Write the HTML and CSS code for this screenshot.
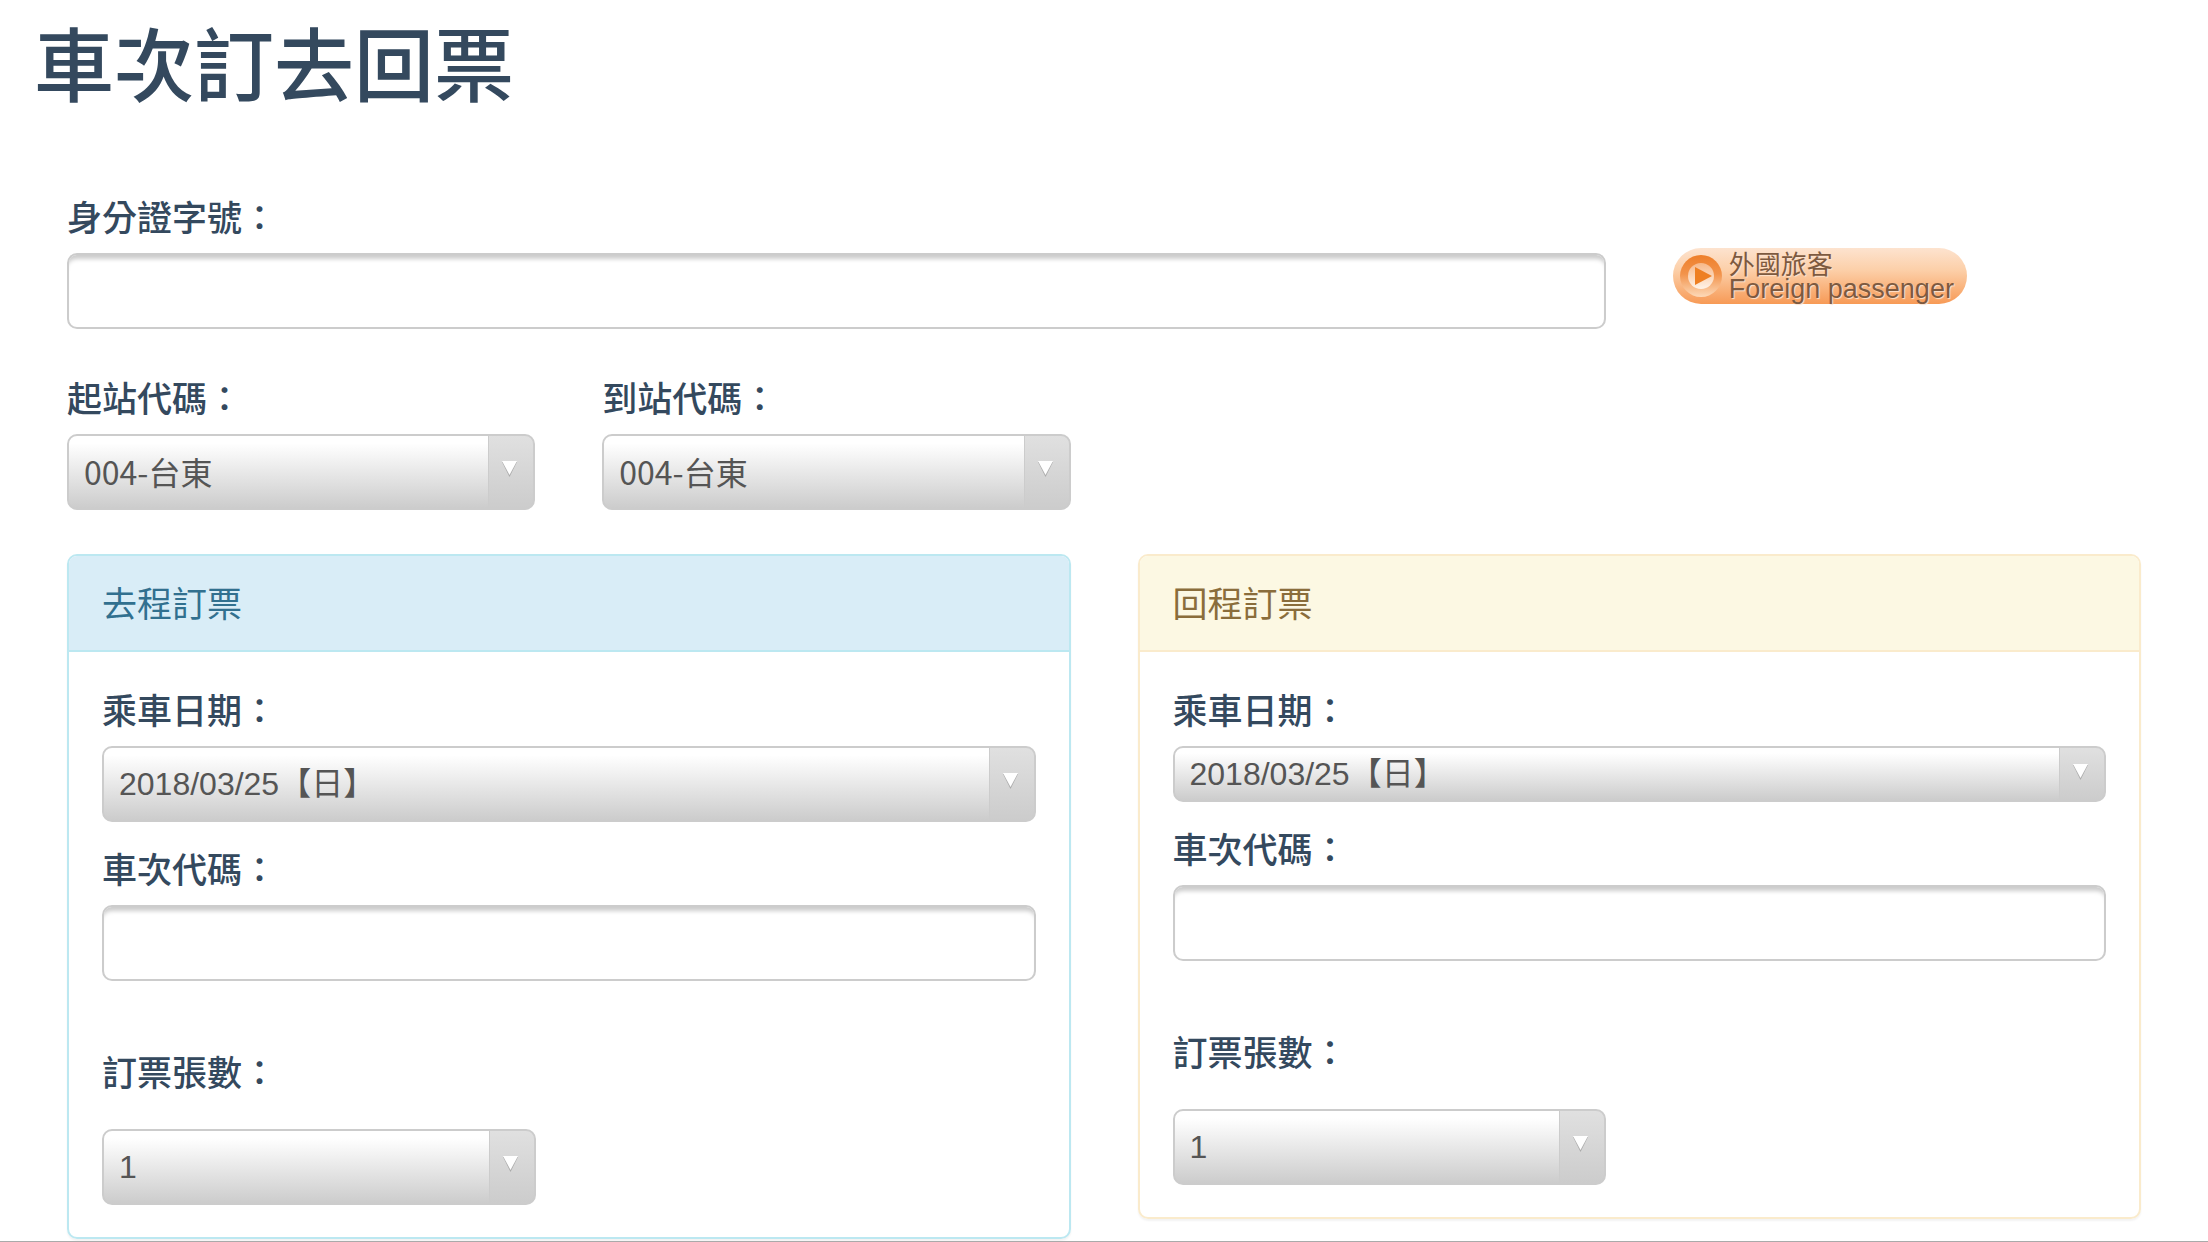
FILE: index.html
```html
<!DOCTYPE html>
<html lang="zh-Hant">
<head>
    <meta charset="UTF-8">
    <meta name="viewport" content="width=device-width, initial-scale=1.0">
    <title>車次訂去回票</title>
    <link rel="stylesheet" href="styles.css">
</head>
<body>
    <h1>車次訂去回票</h1>
    <form class="booking">
        <div class="field field-id">
            <label for="personId">身分證字號：</label>
            <input type="text" id="personId" name="personId">
        </div>
        <button type="button" class="foreign">
            <svg width="44" height="44" viewBox="0 0 44 44" aria-hidden="true">
                <defs>
                    <linearGradient id="ring" x1="0" y1="0" x2="0" y2="1">
                        <stop offset="0" stop-color="#ee7f2a"/>
                        <stop offset="0.45" stop-color="#f2934b"/>
                        <stop offset="1" stop-color="#fdd9b8"/>
                    </linearGradient>
                    <linearGradient id="disc" x1="0" y1="0" x2="0" y2="1">
                        <stop offset="0" stop-color="#f7b888"/>
                        <stop offset="1" stop-color="#fff3e8"/>
                    </linearGradient>
                </defs>
                <circle cx="22" cy="22" r="21" fill="url(#ring)"/>
                <circle cx="22" cy="22" r="13" fill="url(#disc)"/>
                <path d="M16 13 L33 22 L16 31 Z" fill="#ee7f22"/>
            </svg>
            <span class="foreign-text">
                <span class="foreign-zh">外國旅客</span>
                <span class="foreign-en">Foreign passenger</span>
            </span>
        </button>

        <div class="field field-station">
            <label for="fromStation">起站代碼：</label>
            <select id="fromStation" name="fromStation">
                <option>004-台東</option>
            </select>
        </div>
        <div class="field field-station">
            <label for="toStation">到站代碼：</label>
            <select id="toStation" name="toStation">
                <option>004-台東</option>
            </select>
        </div>

        <section class="panel panel-info">
            <h2>去程訂票</h2>
            <div class="panel-body">
                <div class="field">
                    <label for="goDate">乘車日期：</label>
                    <select id="goDate" name="goDate" class="latin">
                        <option>2018/03/25【日】</option>
                    </select>
                </div>
                <div class="field">
                    <label for="goTrain">車次代碼：</label>
                    <input type="text" id="goTrain" name="goTrain">
                </div>
                <div class="field field-count">
                    <label for="goCount">訂票張數：</label>
                    <select id="goCount" name="goCount" class="latin">
                        <option>1</option>
                    </select>
                </div>
            </div>
        </section>

        <section class="panel panel-warning">
            <h2>回程訂票</h2>
            <div class="panel-body">
                <div class="field">
                    <label for="backDate">乘車日期：</label>
                    <select id="backDate" name="backDate" class="latin compact">
                        <option>2018/03/25【日】</option>
                    </select>
                </div>
                <div class="field">
                    <label for="backTrain">車次代碼：</label>
                    <input type="text" id="backTrain" name="backTrain">
                </div>
                <div class="field field-count">
                    <label for="backCount">訂票張數：</label>
                    <select id="backCount" name="backCount" class="latin">
                        <option>1</option>
                    </select>
                </div>
            </div>
        </section>
    </form>
</body>
</html>
```

FILE: styles.css
```css
* {
    box-sizing: border-box;
}

body {
    font-family: "Noto Sans CJK TC", sans-serif;
    margin: 0;
    padding: 16px 34px 0;
    min-height: 100vh;
    color: #34495e;
    background-color: #fff;
    border-bottom: 1px solid #aaa;
}

h1 {
    margin: 0 0 87px;
    font-size: 80px;
    font-weight: 500;
    line-height: 88px;
}

.booking {
    display: grid;
    grid-template-columns: repeat(12, minmax(0, 1fr));
    column-gap: 67px;
    row-gap: 43px;
    align-items: start;
    padding: 0 33px;
}

.field {
    display: flex;
    flex-direction: column;
    gap: 12px;
}

.field-id {
    grid-column: span 9;
}

.field-station {
    grid-column: span 3;
}

label {
    font-size: 35px;
    font-weight: 500;
    line-height: 50px;
}

input,
select {
    width: 100%;
    height: 76px;
    padding: 0 15px;
    border: 2px solid #ccc;
    border-radius: 10px;
    font-family: inherit;
    font-size: 32px;
    color: #555;
}

input {
    background: #fff;
    box-shadow: inset 0 7px 4px -3px #ccc;
}

/* white arrow, arrow box with its left line, then the grey button face */
select {
    appearance: none;
    padding-bottom: 2px;
    background-color: #ddd;
    background-image:
        url("data:image/svg+xml,%3Csvg xmlns='http://www.w3.org/2000/svg' width='17' height='17'%3E%3Cpath d='M1 1H16L8.500 16Z' fill='%23aaa'/%3E%3Cpath d='M1 0H16L8.500 14Z' fill='%23fff'/%3E%3C/svg%3E"),
        linear-gradient(#ccc, #ccc),
        linear-gradient(#e0e0e0, #ccc),
        linear-gradient(#fff 10%, #ccc);
    background-repeat: no-repeat;
    background-position: right 15px top 45%, right 44px top, right top, left top;
    background-size: 17px 17px, 1px 100%, 45px 100%, 100% 100%;
}

.latin {
    padding-bottom: 0;
    font-family: "Liberation Sans", "Noto Sans CJK TC", sans-serif;
}

.compact {
    height: 56px;
}

.foreign {
    grid-column: span 3;
    justify-self: start;
    display: flex;
    align-items: center;
    gap: 6px;
    height: 56px;
    margin-top: 57px;
    padding: 0 13px 0 6px;
    border: none;
    border-radius: 28px;
    background: linear-gradient(#fde3cf, #fccfa8 40%, #f79a56);
    color: #7d5a40;
    text-align: left;
    cursor: pointer;
}

.foreign svg {
    flex: none;
}

.foreign-text {
    display: flex;
    flex-direction: column;
    line-height: 26px;
    text-shadow: 1px 1px 1px #fde3cf;
}

.foreign-zh {
    font-family: "Noto Sans CJK TC", sans-serif;
    font-size: 26px;
}

.foreign-en {
    font-family: "Liberation Sans", sans-serif;
    font-size: 27px;
}

.panel {
    grid-column: span 6;
    margin-top: 1px;
    border: 2px solid;
    border-radius: 10px;
    box-shadow: 0 2px 2px rgba(0, 0, 0, 0.05);
}

.panel h2 {
    margin: 0;
    padding: 21px 33px 23px;
    border-bottom: 2px solid;
    border-color: inherit;
    border-radius: 8px 8px 0 0;
    font-size: 35px;
    font-weight: 400;
    line-height: 50px;
}

.panel-body {
    display: flex;
    flex-direction: column;
    gap: 21px;
    padding: 32px 33px;
}

.panel-info {
    grid-column: 1 / span 6;
    border-color: #bce8f1;
}

.panel-info h2 {
    color: #31708f;
    background-color: #d9edf7;
}

.panel-warning {
    border-color: #faebcc;
}

.panel-warning h2 {
    color: #8a6d3b;
    background-color: #fcf8e3;
}

.field-count {
    width: calc(50% - 33px);
    margin-top: 44px;
    gap: 33px;
}
```
